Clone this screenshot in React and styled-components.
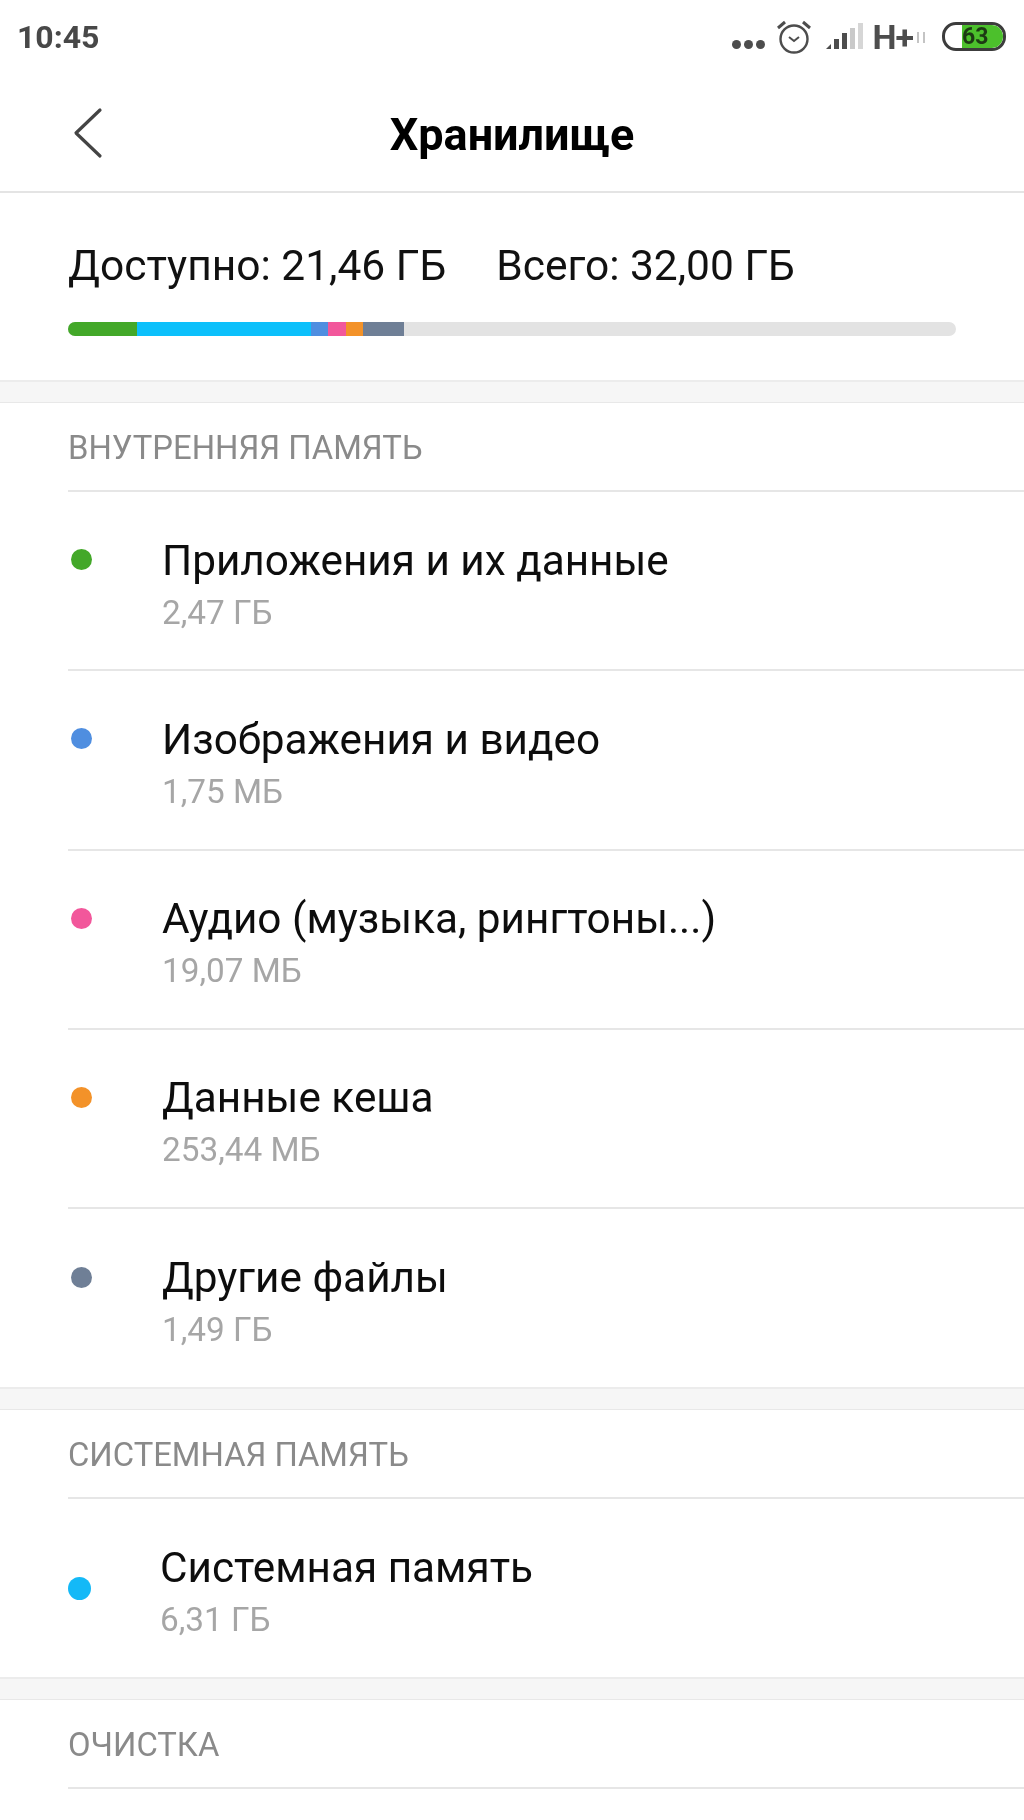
import styled, { createGlobalStyle } from "styled-components";

const GlobalStyle = createGlobalStyle`
  html, body {
    margin: 0;
    padding: 0;
    background: #fff;
    font-family: Roboto, "Noto Sans", sans-serif;
  }
  * { box-sizing: border-box; }
`;

const groups = [
  {
    label: "ВНУТРЕННЯЯ ПАМЯТЬ",
    items: [
      { title: "Приложения и их данные", size: "2,47 ГБ", color: "#43a829" },
      { title: "Изображения и видео", size: "1,75 МБ", color: "#4f8ee0" },
      { title: "Аудио (музыка, рингтоны...)", size: "19,07 МБ", color: "#f2579b" },
      { title: "Данные кеша", size: "253,44 МБ", color: "#f39229" },
      { title: "Другие файлы", size: "1,49 ГБ", color: "#6f7f96" },
    ],
  },
  {
    label: "СИСТЕМНАЯ ПАМЯТЬ",
    system: true,
    items: [{ title: "Системная память", size: "6,31 ГБ", color: "#14b9f7" }],
  },
];

const usage = [
  { color: "#43a829", width: 69 },
  { color: "#0cc0fb", width: 174 },
  { color: "#4f8ee0", width: 17 },
  { color: "#f2579b", width: 18 },
  { color: "#f39229", width: 17 },
  { color: "#6f7f96", width: 41 },
];

const App = () => (
  <Page>
    <GlobalStyle />
    <StatusBar>
      <Clock>10:45</Clock>
      <StatusIcons>
        <MoreDots>
          <i />
          <i />
          <i />
        </MoreDots>
        <AlarmIcon width="34" height="36" viewBox="0 0 34 36" fill="none" stroke="#4d4d4d" strokeWidth="2.4">
          <circle cx="17" cy="20" r="13.5" />
          <path d="M12 18l5 4 5-4" strokeWidth="2" />
          <path d="M1 9l7-6M33 9l-7-6" strokeWidth="3" />
        </AlarmIcon>
        <svg width="38" height="30" viewBox="0 0 38 30">
          <path d="M0 27l5-5v5z" fill="#4d4d4d" />
          <rect x="8" y="17" width="5" height="10" fill="#4d4d4d" />
          <rect x="16" y="11" width="5" height="16" fill="#4d4d4d" />
          <rect x="24" y="6" width="5" height="21" fill="#c9c9c9" />
          <rect x="32" y="1" width="5" height="26" fill="#d6d6d6" />
        </svg>
        <NetworkType>H+</NetworkType>
        <svg width="12" height="14" viewBox="0 0 12 14" stroke="#c4c4c4" strokeWidth="2">
          <path d="M3 13V2M9 13V2" />
        </svg>
        <Battery>
          <BatteryFill />
          <BatteryLevel>63</BatteryLevel>
        </Battery>
      </StatusIcons>
    </StatusBar>

    <Header>
      <BackButton>
        <svg width="32" height="52" viewBox="0 0 32 52" fill="none" stroke="#444" strokeWidth="3.2" strokeLinecap="round" strokeLinejoin="round">
          <path d="M28 3L4 26l24 23" />
        </svg>
      </BackButton>
      <Title>Хранилище</Title>
    </Header>

    <Summary>
      <Totals>
        <span>Доступно: 21,46 ГБ</span>
        <span>Всего: 32,00 ГБ</span>
      </Totals>
      <UsageBar>
        {usage.map((part) => (
          <UsagePart key={part.color} $color={part.color} $width={part.width} />
        ))}
      </UsageBar>
    </Summary>

    {groups.map((group) => (
      <Section key={group.label}>
        <Band />
        <SectionLabel>{group.label}</SectionLabel>
        {group.items.map((item) => (
          <Row key={item.title} $system={group.system}>
            <Dot $color={item.color} $system={group.system} />
            <RowText>
              <RowTitle>{item.title}</RowTitle>
              <RowSize>{item.size}</RowSize>
            </RowText>
          </Row>
        ))}
      </Section>
    ))}

    <Section>
      <Band />
      <SectionLabel>ОЧИСТКА</SectionLabel>
    </Section>
  </Page>
);

const Page = styled.div`
  width: 1024px;
  height: 1820px;
  overflow: hidden;
  background: #fff;
  filter: blur(0.4px);
`;

const StatusBar = styled.div`
  height: 73px;
  padding: 0 18px 0 17px;
  display: flex;
  align-items: center;
  justify-content: space-between;
`;

const Clock = styled.div`
  font-size: 32px;
  font-weight: 700;
  color: #484848;
`;

const StatusIcons = styled.div`
  display: flex;
  align-items: center;
  gap: 8px;
`;

const MoreDots = styled.div`
  display: flex;
  gap: 3px;
  margin-top: 16px;
  margin-right: 4px;
  i {
    width: 9px;
    height: 9px;
    border-radius: 50%;
    background: #4d4d4d;
  }
`;

const AlarmIcon = styled.svg`
  margin-right: 7px;
`;

const NetworkType = styled.div`
  font-size: 34px;
  font-weight: 700;
  color: #4d4d4d;
  letter-spacing: -1px;
  margin-right: -6px;
`;

const Battery = styled.div`
  position: relative;
  width: 64px;
  height: 29px;
  margin-left: 7px;
  border: 3px solid #3c3c3c;
  border-radius: 14px;
  overflow: hidden;
  display: flex;
  justify-content: flex-end;
`;

const BatteryFill = styled.div`
  width: 41px;
  background: #4cc02c;
  border-radius: 0 11px 11px 0;
`;

const BatteryLevel = styled.div`
  position: absolute;
  left: 17px;
  top: -3px;
  font-size: 23px;
  line-height: 29px;
  font-weight: 700;
  color: #1d3a14;
`;

const Header = styled.div`
  position: relative;
  height: 120px;
  padding-top: 5px;
  border-bottom: 2px solid #e4e4e4;
  display: flex;
  align-items: center;
  justify-content: center;
`;

const BackButton = styled.div`
  position: absolute;
  left: 72px;
  top: 34px;
  display: flex;
`;

const Title = styled.h1`
  margin: 0;
  font-size: 45px;
  font-weight: 700;
  color: #000;
`;

const Summary = styled.div`
  height: 187px;
  padding: 49px 68px 0;
`;

const Totals = styled.div`
  display: flex;
  gap: 50px;
  font-size: 42.5px;
  line-height: 48px;
  color: #111;
`;

const UsageBar = styled.div`
  display: flex;
  height: 14px;
  margin-top: 32px;
  background: #e3e3e3;
  border-radius: 7px;
  overflow: hidden;
`;

const UsagePart = styled.div`
  width: ${(p) => p.$width}px;
  background: ${(p) => p.$color};
`;

const Section = styled.section`
  background: #fff;
`;

const Band = styled.div`
  height: 23px;
  background: #f6f6f6;
  border-top: 2px solid #ececec;
  border-bottom: 1px solid #e8e8e8;
`;

const SectionLabel = styled.div`
  height: 89px;
  margin-left: 68px;
  padding-top: 2px;
  border-bottom: 2px solid #e6e6e6;
  display: flex;
  align-items: center;
  font-size: 32.8px;
  color: #8a8a8a;
`;

const Row = styled.div`
  height: 179.25px;
  margin-left: 68px;
  display: flex;
  align-items: center;
  gap: ${(p) => (p.$system ? "69px" : "70px")};
  padding-left: ${(p) => (p.$system ? "0" : "3px")};
  border-bottom: 2px solid #e6e6e6;
  &:last-child {
    height: 178px;
    border-bottom: none;
  }
`;

const Dot = styled.div`
  flex: none;
  width: ${(p) => (p.$system ? "23px" : "21px")};
  height: ${(p) => (p.$system ? "23px" : "21px")};
  border-radius: 50%;
  background: ${(p) => p.$color};
  margin-top: ${(p) => (p.$system ? "0" : "-42px")};
`;

const RowText = styled.div`
  padding-top: 12px;
`;

const RowTitle = styled.div`
  font-size: 42.3px;
  line-height: 52px;
  color: #0d0d0d;
`;

const RowSize = styled.div`
  font-size: 33.3px;
  line-height: 52px;
  color: #a6a6a6;
`;

export default App;
